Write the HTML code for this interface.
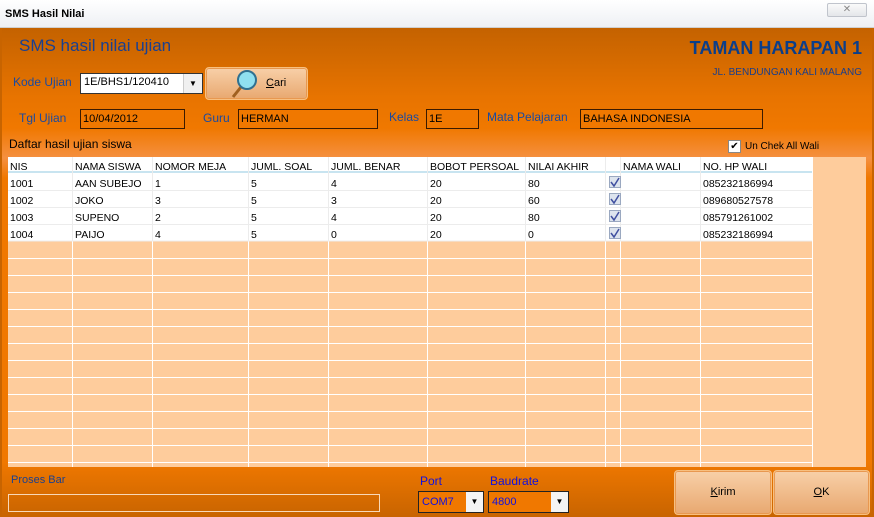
<!DOCTYPE html>
<html><head><meta charset="utf-8"><style>
*{margin:0;padding:0;box-sizing:border-box}
body{width:874px;height:517px;overflow:hidden;font-family:"Liberation Sans",sans-serif;font-size:11px;position:relative;background:#c86400}
.a{position:absolute;white-space:nowrap}
.lbl{color:#1a4aa0;font-size:12px}
.box{position:absolute;border:1px solid #3a1a00;background:#f07800;font-size:11px;padding:0 2px;line-height:18px;color:#000}
.btn{position:absolute;border:1px solid #f8c080;border-radius:4px;background:linear-gradient(#f8d0a8,#e8a870);box-shadow:inset 0 0 0 1px #e89850;text-align:center;color:#000}
</style></head><body>
<div class="a" style="left:0;top:0;width:874px;height:28px;background:linear-gradient(#fff,#eef0f4);border-bottom:1px solid #d0d0d0"></div>
<div class="a" style="left:5px;top:8px;font-size:11px;font-weight:bold;color:#000">SMS Hasil Nilai</div>
<div class="a" style="left:827px;top:3px;width:40px;height:14px;border:1px solid #c0c4cc;border-radius:2px;background:linear-gradient(#fafafa,#e4e6ea);color:#888;text-align:center;font-size:10px;line-height:12px">✕</div>
<div class="a" style="left:2px;top:28px;width:870px;height:489px;background:linear-gradient(#c46200 0px,#e87400 70px,#f07800 100px,#f59040 130px,#f07800 150px)"></div>
<div class="a" style="left:2px;top:462px;width:870px;height:55px;background:linear-gradient(#f07800,#c86400)"></div>
<div class="a" style="left:19px;top:36px;font-size:17px;color:#1a4090">SMS hasil nilai ujian</div>
<div class="a" style="right:12px;top:38px;font-size:18px;font-weight:bold;color:#0a3e8a">TAMAN HARAPAN 1</div>
<div class="a" style="right:12px;top:67px;font-size:10px;color:#1a3e8a">JL. BENDUNGAN KALI MALANG</div>
<div class="a lbl" style="left:13px;top:75px">Kode Ujian</div>
<div class="a" style="left:80px;top:73px;width:123px;height:21px;border:1px solid #333;background:#fff"></div>
<div class="a" style="left:83px;top:76px;background:#fff;color:#000;font-size:11px;padding:0 1px">1E/BHS1/120410</div>
<div class="a" style="left:183px;top:74px;width:19px;height:19px;background:#f0f0f0;border-left:1px solid #ccc;text-align:center;font-size:8px;line-height:19px">▼</div>
<div class="btn" style="left:205px;top:67px;width:103px;height:33px"><span style="position:absolute;left:60px;top:9px;font-size:11px"><u>C</u>ari</span>
<svg style="position:absolute;left:24px;top:1px" width="30" height="30" viewBox="0 0 30 30"><line x1="11" y1="18" x2="3" y2="28" stroke="#a06020" stroke-width="3"/><circle cx="17" cy="11" r="9" fill="#8fe0f0" stroke="#307090" stroke-width="2"/></svg></div>
<div class="a lbl" style="left:19px;top:111px">Tgl Ujian</div>
<div class="box" style="left:80px;top:109px;width:105px;height:20px">10/04/2012</div>
<div class="a lbl" style="left:203px;top:111px">Guru</div>
<div class="box" style="left:238px;top:109px;width:140px;height:20px">HERMAN</div>
<div class="a lbl" style="left:389px;top:110px">Kelas</div>
<div class="box" style="left:426px;top:109px;width:53px;height:20px">1E</div>
<div class="a lbl" style="left:487px;top:110px">Mata Pelajaran</div>
<div class="box" style="left:580px;top:109px;width:183px;height:20px">BAHASA INDONESIA</div>
<div class="a" style="left:9px;top:137px;font-size:12px;color:#000">Daftar hasil ujian siswa</div>
<div class="a" style="left:728px;top:140px;width:13px;height:13px;background:#fff;border:1px solid #888;font-size:10px;line-height:11px;text-align:center">✔</div>
<div class="a" style="left:745px;top:141px;font-size:10px">Un Chek All Wali</div>
<svg class="a" style="left:0;top:0" width="874" height="517">
<rect x="8" y="157" width="858" height="310" fill="#fecc9c"/>
<rect x="8" y="157" width="804" height="84" fill="#fff"/>
<rect x="8" y="171" width="804" height="2" fill="#c8e4f0"/>
<g stroke="#fff" stroke-width="1">
<line x1="8" y1="258.5" x2="812" y2="258.5"/><line x1="8" y1="275.5" x2="812" y2="275.5"/><line x1="8" y1="292.5" x2="812" y2="292.5"/><line x1="8" y1="309.5" x2="812" y2="309.5"/><line x1="8" y1="326.5" x2="812" y2="326.5"/><line x1="8" y1="343.5" x2="812" y2="343.5"/><line x1="8" y1="360.5" x2="812" y2="360.5"/><line x1="8" y1="377.5" x2="812" y2="377.5"/><line x1="8" y1="394.5" x2="812" y2="394.5"/><line x1="8" y1="411.5" x2="812" y2="411.5"/><line x1="8" y1="428.5" x2="812" y2="428.5"/><line x1="8" y1="445.5" x2="812" y2="445.5"/><line x1="8" y1="462.5" x2="812" y2="462.5"/>
<line x1="72.5" y1="241" x2="72.5" y2="467"/><line x1="152.5" y1="241" x2="152.5" y2="467"/><line x1="248.5" y1="241" x2="248.5" y2="467"/><line x1="328.5" y1="241" x2="328.5" y2="467"/><line x1="427.5" y1="241" x2="427.5" y2="467"/><line x1="525.5" y1="241" x2="525.5" y2="467"/><line x1="605.5" y1="241" x2="605.5" y2="467"/><line x1="620.5" y1="241" x2="620.5" y2="467"/><line x1="700.5" y1="241" x2="700.5" y2="467"/><line x1="812.5" y1="157" x2="812.5" y2="467"/>
</g>
<g stroke="#ececec" stroke-width="1">
<line x1="8" y1="190.5" x2="812" y2="190.5"/><line x1="8" y1="207.5" x2="812" y2="207.5"/><line x1="8" y1="224.5" x2="812" y2="224.5"/><line x1="8" y1="241" x2="812" y2="241"/>
<line x1="72.5" y1="157" x2="72.5" y2="241"/><line x1="152.5" y1="157" x2="152.5" y2="241"/><line x1="248.5" y1="157" x2="248.5" y2="241"/><line x1="328.5" y1="157" x2="328.5" y2="241"/><line x1="427.5" y1="157" x2="427.5" y2="241"/><line x1="525.5" y1="157" x2="525.5" y2="241"/><line x1="605.5" y1="157" x2="605.5" y2="241"/><line x1="620.5" y1="157" x2="620.5" y2="241"/><line x1="700.5" y1="157" x2="700.5" y2="241"/>
</g>
<g fill="#dde4ee" stroke="#9aa8c0"><rect x="609.5" y="176.5" width="11" height="11"/><rect x="609.5" y="193.5" width="11" height="11"/><rect x="609.5" y="210.5" width="11" height="11"/><rect x="609.5" y="227.5" width="11" height="11"/></g>
<g fill="none" stroke="#4050a0" stroke-width="1.5"><path d="M611 182l3 4 5-8"/><path d="M611 199l3 4 5-8"/><path d="M611 216l3 4 5-8"/><path d="M611 233l3 4 5-8"/></g>
<g font-family="Liberation Sans" font-size="10.5" fill="#000">
<text x="10" y="170">NIS</text><text x="75" y="170">NAMA SISWA</text><text x="155" y="170">NOMOR MEJA</text><text x="251" y="170">JUML. SOAL</text><text x="331" y="170">JUML. BENAR</text><text x="430" y="170">BOBOT PERSOAL</text><text x="528" y="170">NILAI AKHIR</text><text x="623" y="170">NAMA WALI</text><text x="703" y="170">NO. HP WALI</text>
<text x="10" y="187">1001</text><text x="75" y="187">AAN SUBEJO</text><text x="155" y="187">1</text><text x="251" y="187">5</text><text x="331" y="187">4</text><text x="430" y="187">20</text><text x="528" y="187">80</text><text x="703" y="187">085232186994</text>
<text x="10" y="204">1002</text><text x="75" y="204">JOKO</text><text x="155" y="204">3</text><text x="251" y="204">5</text><text x="331" y="204">3</text><text x="430" y="204">20</text><text x="528" y="204">60</text><text x="703" y="204">089680527578</text>
<text x="10" y="221">1003</text><text x="75" y="221">SUPENO</text><text x="155" y="221">2</text><text x="251" y="221">5</text><text x="331" y="221">4</text><text x="430" y="221">20</text><text x="528" y="221">80</text><text x="703" y="221">085791261002</text>
<text x="10" y="238">1004</text><text x="75" y="238">PAIJO</text><text x="155" y="238">4</text><text x="251" y="238">5</text><text x="331" y="238">0</text><text x="430" y="238">20</text><text x="528" y="238">0</text><text x="703" y="238">085232186994</text>
</g>
</svg>
<div class="a" style="left:11px;top:474px;font-size:11px;color:#1a4090">Proses Bar</div>
<div class="a" style="left:8px;top:494px;width:372px;height:18px;border:1px solid #f8d8b8"></div>
<div class="a" style="left:420px;top:474px;font-size:12px;color:#1010e0">Port</div>
<div class="a" style="left:490px;top:474px;font-size:12px;color:#1010e0">Baudrate</div>
<div class="a" style="left:418px;top:491px;width:66px;height:22px;border:1px solid #222;background:#f07800"><span style="position:absolute;left:3px;top:4px;color:#1010e0;font-size:11px">COM7</span><span style="position:absolute;right:0;top:0;width:17px;height:20px;background:#f4f4f4;text-align:center;font-size:8px;line-height:20px">▼</span></div>
<div class="a" style="left:488px;top:491px;width:81px;height:22px;border:1px solid #222;background:#f07800"><span style="position:absolute;left:3px;top:4px;color:#1010e0;font-size:11px">4800</span><span style="position:absolute;right:0;top:0;width:17px;height:20px;background:#f4f4f4;text-align:center;font-size:8px;line-height:20px">▼</span></div>
<div class="btn" style="left:674px;top:470px;width:98px;height:45px;line-height:43px"><u>K</u>irim</div>
<div class="btn" style="left:773px;top:470px;width:97px;height:45px;line-height:43px"><u>O</u>K</div>
</body></html>
